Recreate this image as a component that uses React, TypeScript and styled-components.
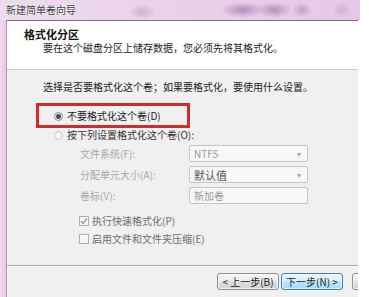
import React from "react";
import styled, { createGlobalStyle } from "styled-components";

const Global = createGlobalStyle`
  html, body { margin: 0; padding: 0; background: #ffffff; }
  body { font-family: "Noto Sans CJK SC", "Noto Sans", "Liberation Sans", sans-serif; font-size: 10px; color: #222; }
  * { box-sizing: border-box; }
`;

const Page = styled.div`
  width: 369px;
  height: 297px;
  background: #ffffff;
  overflow: hidden;
  display: flex;
  flex-direction: column;
`;

const TitleBar = styled.div`
  width: 360px;
  height: 20px;
  flex-shrink: 0;
  padding-left: 6px;
  font-size: 10px;
  line-height: 19px;
  color: #3c3c3c;
  text-shadow: 0 0 3px #fff, 0 0 2px #fff;
  background:
    radial-gradient(ellipse 14px 8px at 142px 12px, rgba(170, 110, 170, 0.35), transparent),
    radial-gradient(ellipse 22px 8px at 243px 10px, rgba(140, 80, 150, 0.55), transparent),
    radial-gradient(ellipse 18px 8px at 274px 10px, rgba(140, 80, 150, 0.5), transparent),
    radial-gradient(ellipse 10px 8px at 302px 10px, rgba(150, 90, 160, 0.4), transparent),
    radial-gradient(ellipse 10px 8px at 342px 10px, rgba(170, 110, 170, 0.3), transparent),
    linear-gradient(to right, #eedcee 0%, #ebd3ea 40%, #e6c8e6 100%);
`;

const Body = styled.div`
  flex: 1;
  display: flex;
  flex-direction: row;
  min-height: 0;
`;

const LeftEdge = styled.div`
  width: 6px;
  flex-shrink: 0;
  background: linear-gradient(to right, #f3dcef, #e9c6e4);
`;

const Client = styled.div`
  width: 352px;
  flex-shrink: 0;
  display: flex;
  flex-direction: column;
  border-top: 1px solid #7a7080;
  border-left: 1px solid #b49ab4;
  background: #f0f0f0;
  overflow: hidden;
`;

const Header = styled.div`
  height: 49px;
  flex-shrink: 0;
  background: #ffffff;
  border-bottom: 1px solid #c9c9c9;
  padding-top: 7px;
  display: flex;
  flex-direction: column;
`;

const HeaderTitle = styled.div`
  padding-left: 17px;
  font-size: 11px;
  font-weight: bold;
  line-height: 13px;
  color: #111;
`;

const HeaderSub = styled.div`
  padding-left: 36px;
  margin-top: 1px;
  line-height: 12px;
  color: #222;
`;

const Section = styled.div`
  position: relative;
  flex: 1;
  padding: 11px 0 0 36px;
  display: flex;
  flex-direction: column;
`;

const Instruction = styled.div`
  line-height: 12px;
  color: #222;
`;

const RadioRow = styled.div<{ $top: number; $dim?: boolean }>`
  display: flex;
  align-items: center;
  gap: 4px;
  margin-top: ${(p) => p.$top}px;
  margin-left: 11px;
  line-height: 12px;
  color: ${(p) => (p.$dim ? "#333" : "#222")};
`;

const Radio = styled.span<{ $on?: boolean; $dim?: boolean }>`
  width: 9px;
  height: 9px;
  border-radius: 50%;
  flex-shrink: 0;
  border: 1px solid ${(p) => (p.$dim ? "#c8c8c8" : "#8c8c8c")};
  background: ${(p) =>
    p.$on
      ? "radial-gradient(circle, #3d4a5c 0 2px, #9fb0c0 2.5px, #e8e8e8 3px)"
      : p.$dim
      ? "#f4f4f4"
      : "#eaeaea"};
`;

const FormGrid = styled.div`
  display: grid;
  grid-template-columns: 109px 119px;
  grid-auto-rows: 17px;
  row-gap: 4px;
  margin-top: 4px;
  margin-left: 37px;
  align-items: center;
`;

const FieldLabel = styled.span`
  color: #a8a8a8;
  line-height: 12px;
`;

const Field = styled.div<{ $strong?: boolean }>`
  height: 17px;
  display: flex;
  align-items: center;
  justify-content: space-between;
  padding: 0 6px 0 4px;
  border: 1px solid #c4c4c4;
  border-radius: 2px;
  background: #f7f7f7;
  color: ${(p) => (p.$strong ? "#555" : "#9a9a9a")};
  font-size: ${(p) => (p.$strong ? "11px" : "10px")};
`;

const Arrow = styled.span`
  font-size: 8px;
  color: #a8a8a8;
`;

const CheckRow = styled.div<{ $top: number }>`
  display: flex;
  align-items: center;
  gap: 3px;
  margin-top: ${(p) => p.$top}px;
  margin-left: 36px;
  line-height: 12px;
  color: #6e6e6e;
`;

const Box = styled.span`
  width: 10px;
  height: 10px;
  flex-shrink: 0;
  border: 1px solid #b0b0b0;
  background: #f6f6f6;
  display: flex;
  align-items: center;
  justify-content: center;
`;

const Annotation = styled.div`
  position: absolute;
  left: 29px;
  top: 33px;
  width: 154px;
  height: 25px;
  border: 3px solid #d42a2e;
  pointer-events: none;
`;

const Footer = styled.div`
  height: 32px;
  flex-shrink: 0;
  border-top: 1px solid #a8a8a8;
  box-shadow: inset 0 1px 0 #ffffff;
  padding: 7px 0 0 210px;
  display: flex;
  flex-direction: row;
  gap: 2px;
  overflow: hidden;
`;

const Button = styled.div<{ $focus?: boolean; $gap?: number }>`
  width: 62px;
  height: 17px;
  flex-shrink: 0;
  margin-left: ${(p) => p.$gap ?? 0}px;
  display: flex;
  align-items: center;
  justify-content: center;
  border: 1px solid ${(p) => (p.$focus ? "#3c7fb1" : "#8e8e8e")};
  border-radius: 3px;
  color: #222;
  line-height: 12px;
  background: ${(p) =>
    p.$focus
      ? "linear-gradient(to bottom, #eaf6fd 0%, #d9f0fc 45%, #bee6fd 50%, #a7d9f5 100%)"
      : "linear-gradient(to bottom, #f6f6f6 0%, #ececec 45%, #dfdfdf 50%, #d2d2d2 100%)"};
  box-shadow: inset 0 0 0 1px ${(p) => (p.$focus ? "rgba(255,255,255,0.6)" : "rgba(255,255,255,0.7)")};
`;

export default function App() {
  return (
    <>
      <Global />
      <Page>
        <TitleBar>新建简单卷向导</TitleBar>
        <Body>
          <LeftEdge />
          <Client>
            <Header>
              <HeaderTitle>格式化分区</HeaderTitle>
              <HeaderSub>要在这个磁盘分区上储存数据，您必须先将其格式化。</HeaderSub>
            </Header>
            <Section>
              <Instruction>选择是否要格式化这个卷；如果要格式化，要使用什么设置。</Instruction>
              <RadioRow $top={17}>
                <Radio $on />
                <span>不要格式化这个卷(D)</span>
              </RadioRow>
              <RadioRow $top={7} $dim>
                <Radio $dim />
                <span>按下列设置格式化这个卷(O):</span>
              </RadioRow>
              <FormGrid>
                <FieldLabel>文件系统(F):</FieldLabel>
                <Field>
                  <span>NTFS</span>
                  <Arrow>▾</Arrow>
                </Field>
                <FieldLabel>分配单元大小(A):</FieldLabel>
                <Field $strong>
                  <span>默认值</span>
                  <Arrow>▾</Arrow>
                </Field>
                <FieldLabel>卷标(V):</FieldLabel>
                <Field>
                  <span>新加卷</span>
                </Field>
              </FormGrid>
              <CheckRow $top={11}>
                <Box>
                  <svg width="8" height="8" viewBox="0 0 8 8">
                    <path d="M1 4.2 L3 6.2 L7 1.5" fill="none" stroke="#9a9a9a" strokeWidth="1.4" />
                  </svg>
                </Box>
                <span>执行快速格式化(P)</span>
              </CheckRow>
              <CheckRow $top={6}>
                <Box />
                <span>启用文件和文件夹压缩(E)</span>
              </CheckRow>
              <Annotation />
            </Section>
            <Footer>
              <Button>&lt; 上一步(B)</Button>
              <Button $focus>下一步(N) &gt;</Button>
              <Button $gap={7} aria-label="取消" />
            </Footer>
          </Client>
        </Body>
      </Page>
    </>
  );
}
